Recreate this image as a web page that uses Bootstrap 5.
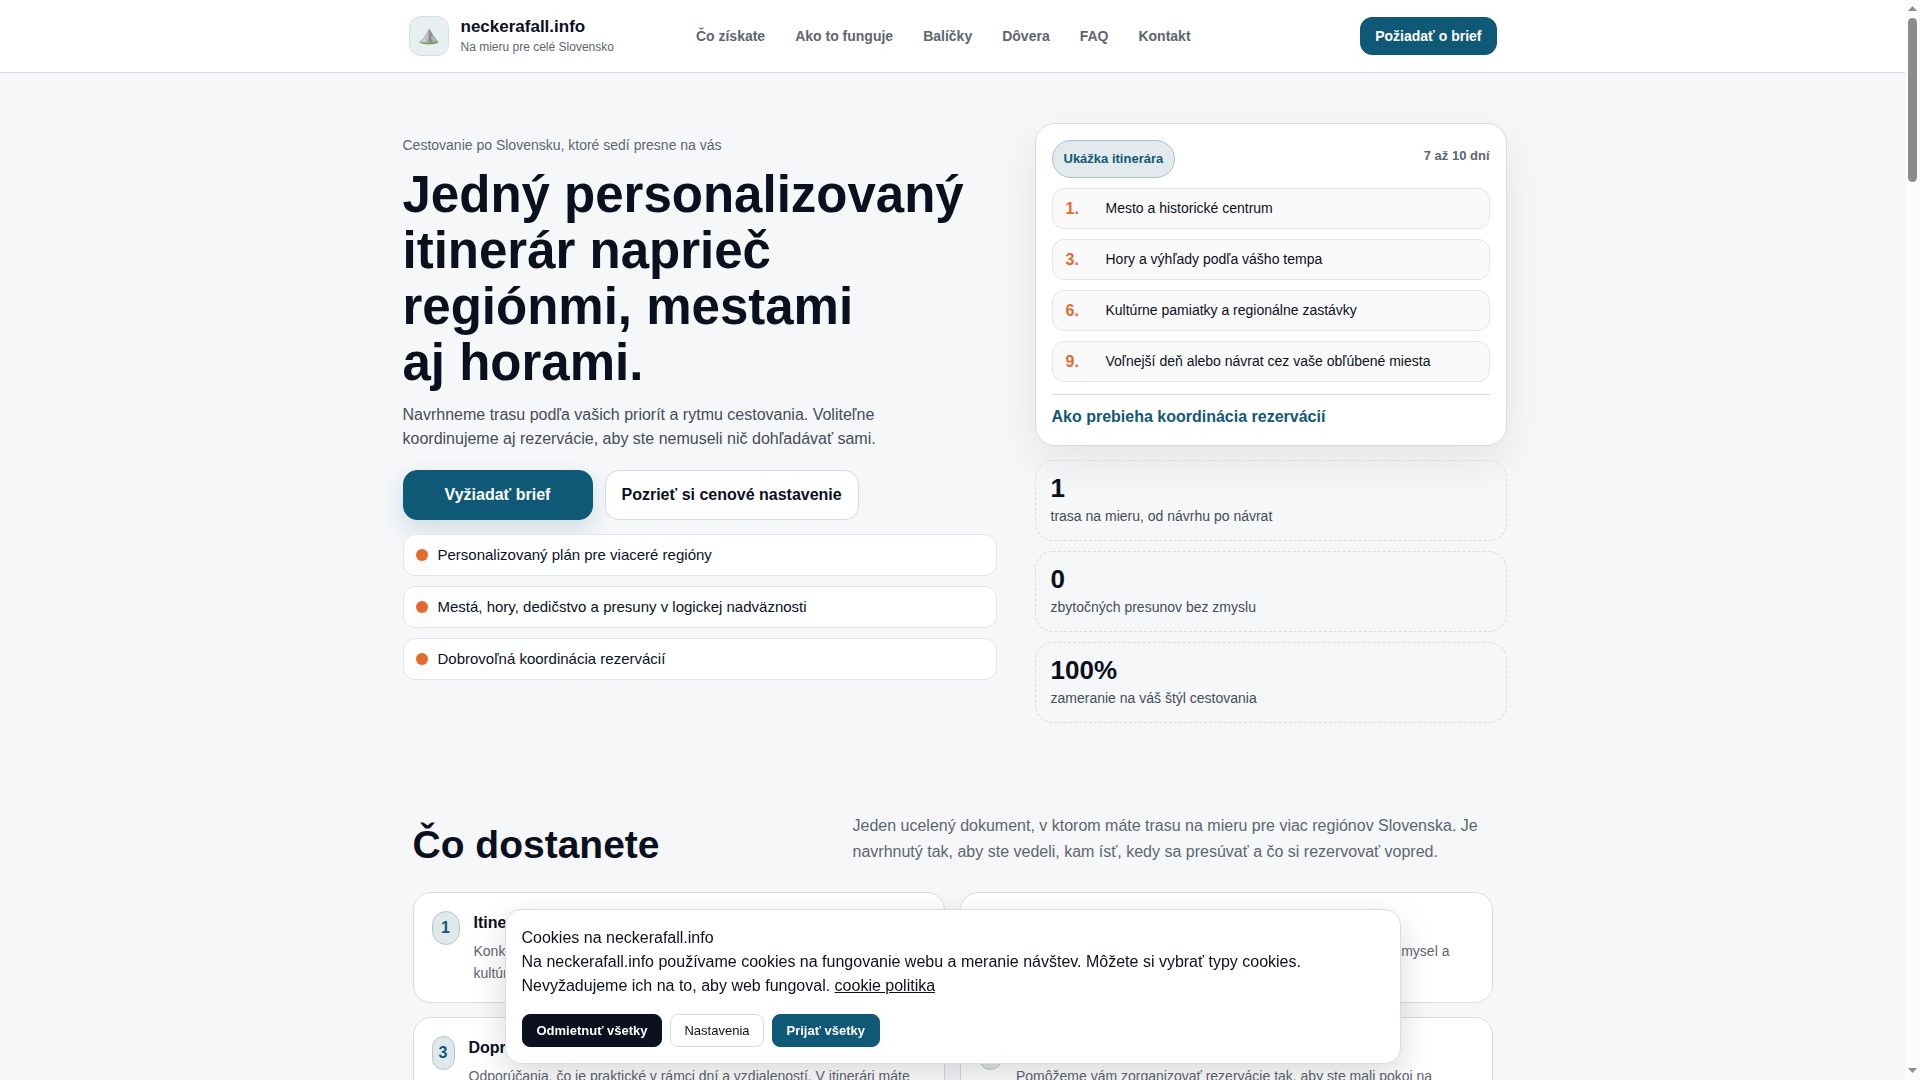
<!DOCTYPE html>
<html lang="sk">
<head>
<meta charset="utf-8">
<meta name="viewport" content="width=device-width, initial-scale=1">
<title>neckerafall.info</title>
<link href="https://cdn.jsdelivr.net/npm/bootstrap@5.3.0/dist/css/bootstrap.min.css" rel="stylesheet">
<style>
:root { --ink:#0b101e; --teal:#0f5977; --orange:#e5692e; --soft:#5d666f; --line:#d9dcde; --paper:#f5f7f9; }
body { font-family:"Liberation Sans",Arial,sans-serif; font-size:16px; line-height:24px; color:var(--ink); background:var(--paper); height:100vh; overflow:hidden; padding-right:15px; }
a { text-decoration:none; }
.text-soft { color:var(--soft); }
.site-head { background:#fff; border-bottom:1px solid var(--line); }
.head-inner { max-width:1120px; padding:16px; }
.brand-icon { width:40px; height:40px; border-radius:12px; background:#e8eff1; border:1px solid #d5dfe2; }
.brand-name { font-size:17px; line-height:22px; font-weight:700; color:var(--ink); }
.brand-sub { font-size:12px; line-height:18px; color:var(--soft); }
.site-nav { gap:30px; margin-left:82px; font-size:14px; font-weight:700; }
.site-nav a { color:var(--soft); }
.btn { --bs-btn-font-weight:700; }
.btn-teal { --bs-btn-color:#fff; --bs-btn-bg:var(--teal); --bs-btn-border-color:var(--teal); --bs-btn-hover-color:#fff; --bs-btn-hover-bg:#0c4a63; }
.btn-plain { --bs-btn-color:var(--ink); --bs-btn-bg:#fff; --bs-btn-border-color:var(--line); --bs-btn-hover-bg:#f3f5f6; }
.btn-ink { --bs-btn-color:#fff; --bs-btn-bg:var(--ink); --bs-btn-border-color:var(--ink); --bs-btn-hover-color:#fff; --bs-btn-hover-bg:#1c2333; }
.btn-head { font-size:14px; line-height:20px; padding:8px 14px; border-radius:12px; }
.hero { max-width:1108px; padding:50px 0 0 4px; display:grid; grid-template-columns:594fr 472fr; column-gap:38px; }
.eyebrow { font-size:14px; line-height:22px; margin:11px 0; }
.hero h1 { font-size:51px; line-height:56px; font-weight:700; margin-bottom:12px; }
.hero-lead { max-width:500px; color:#454d56; margin-bottom:19px; }
.btn-hero { line-height:24px; padding:12px 16px; border-radius:14px; }
.btn-hero.btn-teal { min-width:190px; box-shadow:0 10px 24px rgba(15,89,119,.16); }
.points { gap:10px; margin-top:14px; font-size:15px; line-height:22px; }
.points li { gap:10px; background:rgba(255,255,255,.9); border:1px solid #e2e5e7; border-radius:12px; padding:9px 12px; }
.dot { width:12px; height:12px; border-radius:50%; background:var(--orange); box-shadow:0 8px 14px rgba(229,105,46,.1); }
.sample { background:#fff; border:1px solid var(--line); border-radius:20px; padding:16px; box-shadow:0 16px 44px rgba(0,0,0,.08); }
.pill { font-size:13px; line-height:18px; font-weight:700; color:var(--teal); background:#e2eaed; border:1px solid #a9c3cc; border-radius:999px; padding:9px 11px; }
.days { font-size:13px; line-height:18px; font-weight:700; padding-top:7px; }
.stops { gap:10px; margin:10px 0 12px; font-size:14px; }
.stops li { display:grid; grid-template-columns:30px 1fr; column-gap:10px; line-height:23px; padding:8px 13px; background:#fafafa; border:1px solid #e2e5e7; border-radius:12px; }
.stops strong { color:var(--orange); font-size:16px; }
.sample-foot { border-top:1px solid var(--line); padding-top:10px; font-weight:700; }
.sample-foot a { color:var(--teal); }
.stats { gap:10px; margin-top:14px; }
.stat { border:1px dashed #dadddf; border-radius:18px; padding:11px 15px 13px; }
.stat-num { font-size:26px; line-height:33px; font-weight:700; }
.stat-text { font-size:14px; line-height:22px; color:#454d56; }
.gets { max-width:1080px; padding-top:90px; }
.gets h2 { font-size:39px; line-height:40px; font-weight:700; margin:0; }
.gets-head { display:grid; grid-template-columns:440px 1fr; align-items:end; margin-bottom:27px; }
.gets-head p { line-height:26px; margin:0; }
.gets-grid { display:grid; grid-template-columns:1fr 1fr; gap:14px 15px; }
.get-card { display:flex; align-items:flex-start; gap:14px; padding:18px; background:#fff; border:1px solid var(--line); border-radius:18px; }
.num { min-width:23px; padding:4px 6px; text-align:center; font-weight:700; color:var(--teal); background:#dfe8ea; border:1px solid #b4c6cc; border-radius:999px; }
.num-wide { min-width:28px; }
.get-card h3 { font-size:16px; line-height:24px; font-weight:700; margin:0 0 5px; }
.get-card p { font-size:14px; line-height:22px; margin:0; }
.cookie-wrap { position:fixed; left:0; right:15px; bottom:16px; }
.cookie-box { max-width:896px; background:#fff; border:1px solid var(--line); border-radius:16px; padding:16px; box-shadow:0 12px 34px rgba(11,16,30,.15); }
.cookie-box a { color:var(--ink); text-decoration:underline; }
.cookie-actions { gap:8px; margin-top:16px; }
.cookie-actions .btn { font-size:13px; line-height:19px; padding:6px 14px; border-radius:8px; }
.cookie-actions .btn-plain { --bs-btn-font-weight:400; padding:6px 13px; }
.scroll-track { position:fixed; top:0; right:0; bottom:0; width:15px; background:#fcfcfc; }
.scroll-track svg { display:block; }
.scroll-thumb { width:9px; height:164px; border-radius:5px; background:#8b8b8b; }
</style>
<script src="https://cdn.jsdelivr.net/npm/bootstrap@5.3.0/dist/js/bootstrap.bundle.min.js" defer></script>
</head>
<body>
<header class="site-head">
  <div class="head-inner mx-auto d-flex align-items-center">
    <a href="#" class="d-flex align-items-center gap-2">
      <span class="brand-icon d-flex align-items-center justify-content-center">
        <svg width="22" height="20" viewBox="0 0 22 20" aria-hidden="true">
          <path d="M1 16.500Q5 13 11 13.500T21 16.500Q17 18.500 11 18.500T1 16.500Z" fill="#7ba04a"/>
          <path d="M1.500 16L6 11.500 8 8 11 3 13 5.500 16 10 20 15.500Q12 18 1.500 16Z" fill="#a3a5a5"/>
          <path d="M11 3L9.500 8 11 11 8 16.500 1.500 16 6 11.500 8 8Z" fill="#c0c2c1"/>
          <path d="M11 3L13 5.500 14 9 12.500 11 14.500 16.500 11.500 16.800 10.800 11 12 8Z" fill="#858989"/>
          <path d="M4 15L7 12.500 6.500 15ZM14.500 11L17 14.500 15 14Z" fill="#d9dad8"/>
        </svg>
      </span>
      <span class="ms-1">
        <span class="brand-name d-block">neckerafall.info</span>
        <span class="brand-sub d-block">Na mieru pre celé Slovensko</span>
      </span>
    </a>
    <nav class="site-nav d-flex" aria-label="Hlavná navigácia">
      <a href="#gets">Čo získate</a><a href="#">Ako to funguje</a><a href="#">Balíčky</a><a href="#">Dôvera</a><a href="#">FAQ</a><a href="#">Kontakt</a>
    </nav>
    <button type="button" class="btn btn-teal btn-head ms-auto">Požiadať o brief</button>
  </div>
</header>

<main>
  <section class="hero mx-auto">
    <div>
      <p class="eyebrow text-soft">Cestovanie po Slovensku, ktoré sedí presne na vás</p>
      <h1>Jedný personalizovaný itinerár naprieč regiónmi, mestami aj&nbsp;horami.</h1>
      <p class="hero-lead">Navrhneme trasu podľa vašich priorít a rytmu cestovania. Voliteľne koordinujeme aj rezervácie, aby ste nemuseli nič dohľadávať sami.</p>
      <div class="d-flex gap-2">
        <button type="button" class="btn btn-teal btn-hero">Vyžiadať brief</button>
        <button type="button" class="btn btn-plain btn-hero ms-1">Pozrieť si cenové nastavenie</button>
      </div>
      <ul class="points list-unstyled d-flex flex-column mb-0">
        <li class="d-flex align-items-center"><span class="dot"></span><span>Personalizovaný plán pre viaceré regióny</span></li>
        <li class="d-flex align-items-center"><span class="dot"></span><span>Mestá, hory, dedičstvo a presuny v logickej nadväznosti</span></li>
        <li class="d-flex align-items-center"><span class="dot"></span><span>Dobrovoľná koordinácia rezervácií</span></li>
      </ul>
    </div>
    <div>
      <div class="sample">
        <div class="d-flex justify-content-between align-items-start">
          <span class="pill">Ukážka itinerára</span>
          <span class="days text-soft">7 až 10 dní</span>
        </div>
        <ul class="stops list-unstyled d-flex flex-column">
          <li><strong>1.</strong><span>Mesto a historické centrum</span></li>
          <li><strong>3.</strong><span>Hory a výhľady podľa vášho tempa</span></li>
          <li><strong>6.</strong><span>Kultúrne pamiatky a regionálne zastávky</span></li>
          <li><strong>9.</strong><span>Voľnejší deň alebo návrat cez vaše obľúbené miesta</span></li>
        </ul>
        <div class="sample-foot"><a href="#">Ako prebieha koordinácia rezervácií</a></div>
      </div>
      <div class="stats d-flex flex-column">
        <div class="stat"><div class="stat-num">1</div><div class="stat-text">trasa na mieru, od návrhu po návrat</div></div>
        <div class="stat"><div class="stat-num">0</div><div class="stat-text">zbytočných presunov bez zmyslu</div></div>
        <div class="stat"><div class="stat-num">100%</div><div class="stat-text">zameranie na váš štýl cestovania</div></div>
      </div>
    </div>
  </section>

  <section class="gets mx-auto" id="gets">
    <div class="gets-head">
      <h2>Čo dostanete</h2>
      <p class="text-soft">Jeden ucelený dokument, v ktorom máte trasu na mieru pre viac regiónov Slovenska. Je navrhnutý tak, aby ste vedeli, kam ísť, kedy sa presúvať a čo si rezervovať vopred.</p>
    </div>
    <div class="gets-grid">
      <article class="get-card"><span class="num num-wide">1</span><div><h3>Itinerár na mieru</h3><p class="text-soft">Konkrétny plán dní, ktorý spája mestá, prírodu, hory a<br>kultúrne zastávky.</p></div></article>
      <article class="get-card"><span class="num">2</span><div><h3>Logická trasa</h3><p class="text-soft">Zastávky aj presuny usporiadame tak, aby celá cesta dávala zmysel a<br>mala dobrý rytmus.</p></div></article>
      <article class="get-card"><span class="num">3</span><div><h3>Doprava a presuny</h3><p class="text-soft">Odporúčania, čo je praktické v rámci dní a vzdialeností. V itinerári máte<br>prehľad presunov.</p></div></article>
      <article class="get-card"><span class="num">4</span><div><h3>Koordinácia rezervácií</h3><p class="text-soft">Pomôžeme vám zorganizovať rezervácie tak, aby ste mali pokoj na<br>samotnú cestu.</p></div></article>
    </div>
  </section>
</main>

<div class="cookie-wrap">
  <div class="cookie-box mx-auto" role="dialog" aria-label="Cookies">
    <div>Cookies na neckerafall.info</div>
    <div>Na neckerafall.info používame cookies na fungovanie webu a meranie návštev. Môžete si vybrať typy cookies.<br>Nevyžadujeme ich na to, aby web fungoval. <a href="#">cookie politika</a></div>
    <div class="cookie-actions d-flex">
      <button type="button" class="btn btn-ink">Odmietnuť všetky</button>
      <button type="button" class="btn btn-plain">Nastavenia</button>
      <button type="button" class="btn btn-teal">Prijať všetky</button>
    </div>
  </div>
</div>

<div class="scroll-track d-flex flex-column align-items-center" aria-hidden="true">
  <svg width="9" height="18" viewBox="0 0 9 18"><path d="M0 11L4.500 6 9 11Z" fill="#8b8b8b"/></svg>
  <div class="scroll-thumb"></div>
  <svg class="mt-auto" width="9" height="14" viewBox="0 0 9 14"><path d="M0 2L4.500 7 9 2Z" fill="#8b8b8b"/></svg>
</div>
</body>
</html>
